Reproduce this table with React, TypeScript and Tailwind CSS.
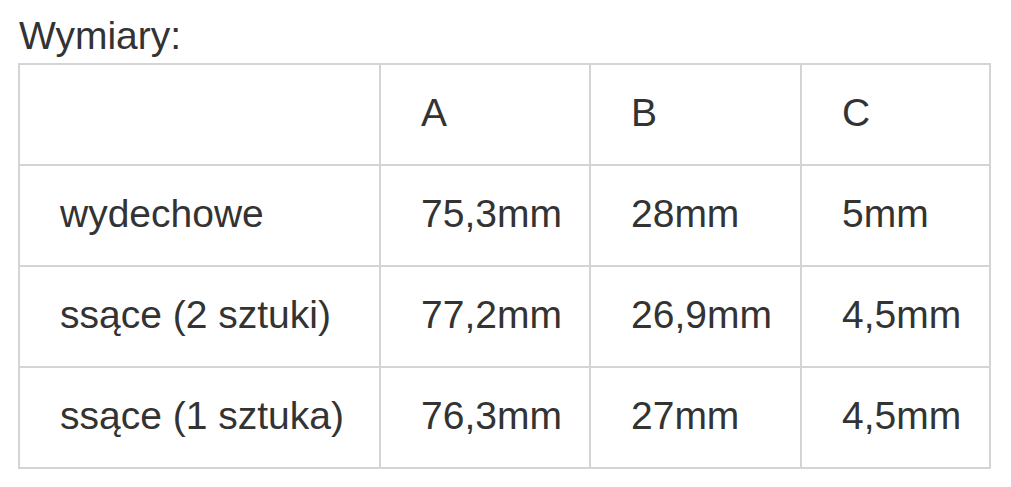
import React from "react";

const rows = [
  ["wydechowe", "75,3mm", "28mm", "5mm"],
  ["ssące (2 sztuki)", "77,2mm", "26,9mm", "4,5mm"],
  ["ssące (1 sztuka)", "76,3mm", "27mm", "4,5mm"],
];

export default function App() {
  return (
    <div className="bg-white w-[1011px] h-[487px] text-[#333333] text-[39px] font-['Liberation_Sans',Arial,sans-serif]">
      <div className="pt-[13px] pl-[19px] leading-[45px]">Wymiary:</div>
      <table className="mt-[5px] ml-[18px] w-[971px] table-fixed border-collapse">
        <colgroup>
          <col className="w-[361px]" />
          <col className="w-[210px]" />
          <col className="w-[211px]" />
          <col className="w-[189px]" />
        </colgroup>
        <tbody>
          <tr>
            <td className="border-2 border-[#d4d4d4] h-[101px] pl-[40px] pb-[4px] leading-[45px]"></td>
            <td className="border-2 border-[#d4d4d4] h-[101px] pl-[40px] pb-[4px] leading-[45px]">A</td>
            <td className="border-2 border-[#d4d4d4] h-[101px] pl-[40px] pb-[4px] leading-[45px]">B</td>
            <td className="border-2 border-[#d4d4d4] h-[101px] pl-[40px] pb-[4px] leading-[45px]">C</td>
          </tr>
          {rows.map((r) => (
            <tr key={r[0]}>
              {r.map((c, i) => (
                <td key={i} className="border-2 border-[#d4d4d4] h-[101px] pl-[40px] pb-[4px] leading-[45px] whitespace-nowrap">
                  {c}
                </td>
              ))}
            </tr>
          ))}
        </tbody>
      </table>
    </div>
  );
}
